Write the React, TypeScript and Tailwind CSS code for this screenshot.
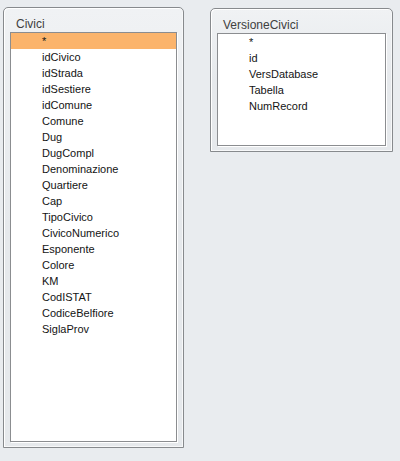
import React from "react";

const civici = [
  "*",
  "idCivico",
  "idStrada",
  "idSestiere",
  "idComune",
  "Comune",
  "Dug",
  "DugCompl",
  "Denominazione",
  "Quartiere",
  "Cap",
  "TipoCivico",
  "CivicoNumerico",
  "Esponente",
  "Colore",
  "KM",
  "CodISTAT",
  "CodiceBelfiore",
  "SiglaProv",
];

const versione = ["*", "id", "VersDatabase", "Tabella", "NumRecord"];

function TablePanel({
  title,
  fields,
  width,
  height,
  listHeight,
  selectedFirst,
  extraClass,
}: {
  title: string;
  fields: string[];
  width: string;
  height: string;
  listHeight: string;
  selectedFirst?: boolean;
  extraClass?: string;
}) {
  return (
    <div
      className={`${width} ${height} ${extraClass ?? ""} flex flex-col border border-[#878a8d] rounded-t-[5px] bg-gradient-to-b from-[#f0f2f4] via-[#e6e9ec] to-[#e6e9ec] shadow-[inset_1px_1px_0_#ffffff,inset_-1px_-1px_0_#f7f8f9] px-[6px] pb-[5px]`}
    >
      <div className="h-[24px] flex items-end pl-[6px] pb-[2px] text-[12px] leading-none text-[#404040] font-['Liberation_Sans',Arial,sans-serif]">
        {title}
      </div>
      <div
        className={`${listHeight} border border-[#8b8d90] bg-white shadow-[1px_1px_0_#ffffff] overflow-hidden`}
      >
        {fields.map((f, i) => (
          <div
            key={f}
            className={`h-[16px] flex items-center pl-[31px] text-[11px] leading-none text-[#141414] font-['Liberation_Sans',Arial,sans-serif] ${
              i === 0 && selectedFirst ? "bg-[#fbb46c]" : ""
            }`}
          >
            {f}
          </div>
        ))}
      </div>
    </div>
  );
}

export default function App() {
  return (
    <div className="w-[400px] h-[461px] bg-[#e9ecef] flex items-start pl-[3px] pt-[7px] gap-[26px]">
      <TablePanel
        title="Civici"
        fields={civici}
        width="w-[181px]"
        height="h-[441px]"
        listHeight="h-[410px]"
        selectedFirst
      />
      <TablePanel
        title="VersioneCivici"
        fields={versione}
        width="w-[183px]"
        height="h-[144px]"
        listHeight="h-[113px]"
        extraClass="mt-[1px]"
      />
    </div>
  );
}
